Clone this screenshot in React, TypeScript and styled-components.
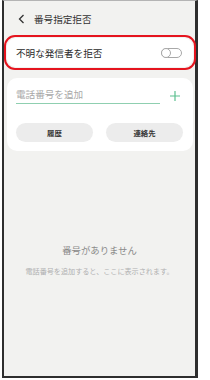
import React from "react";
import styled, { createGlobalStyle } from "styled-components";

const Global = createGlobalStyle`
  html, body { margin: 0; padding: 0; background: #ffffff; }
  body { font-family: "Noto Sans CJK JP", "Noto Sans", sans-serif; }
  * { box-sizing: border-box; }
`;

const Frame = styled.div`
  margin-left: 2px;
  width: 196px;
  height: 378px;
  border-left: 2px solid #2e2e2e;
  border-right: 3px solid #2e2e2e;
  border-bottom: 2px solid #2e2e2e;
  border-top: 1px solid #b4b4b4;
  background: #f2f2f0;
  display: flex;
  flex-direction: column;
`;

const Header = styled.div`
  height: 34px;
  display: flex;
  align-items: center;
  gap: 9px;
  padding-left: 14px;
  padding-top: 1px;
  color: #333;
  font-size: 9.6px;
`;

const Highlight = styled.div`
  border: 2px solid #e5141e;
  border-radius: 11px;
  padding: 1px 1px;
  height: 35px;
  margin-right: -1px;
`;

const RowCard = styled.div`
  height: 100%;
  background: #ffffff;
  border-radius: 9px;
  display: flex;
  align-items: center;
  justify-content: space-between;
  padding: 0 11px 0 9px;
  font-size: 9.6px;
  color: #2a2a2a;
`;

const Toggle = styled.div`
  position: relative;
  width: 21px;
  height: 10px;
  border: 1px solid #a8a8a8;
  border-radius: 5px;
`;

const Knob = styled.div`
  position: absolute;
  left: -1px;
  top: -1px;
  width: 10px;
  height: 10px;
  border: 1px solid #a8a8a8;
  border-radius: 50%;
  background: #fff;
`;

const Card = styled.div`
  margin: 8px 2px 0 3px;
  background: #ffffff;
  border-radius: 10px;
  padding: 10px 10px 9px 9px;
  display: flex;
  flex-direction: column;
`;

const InputRow = styled.div`
  display: flex;
  align-items: center;
  gap: 10px;
`;

const Input = styled.div`
  flex: 1;
  height: 16px;
  font-size: 9.6px;
  color: #a8a8a8;
  border-bottom: 1px solid #8fcfb0;
  line-height: 13px;
`;

const Plus = styled.svg`
  width: 10px;
  height: 10px;
  margin-right: 3px;
`;

const Buttons = styled.div`
  display: grid;
  grid-template-columns: 77px 77px;
  justify-content: space-between;
  margin-top: 19px;
`;

const Pill = styled.div`
  height: 19px;
  border-radius: 10px;
  background: #ececec;
  display: flex;
  align-items: center;
  justify-content: center;
  font-size: 7.4px;
  font-weight: 700;
  color: #333;
`;

const Empty = styled.div`
  flex: 1;
  display: flex;
  flex-direction: column;
  align-items: center;
  padding-top: 92px;
`;

const EmptyTitle = styled.div`
  font-size: 9.4px;
  color: #8a8a8a;
`;

const EmptySub = styled.div`
  margin-top: 9px;
  font-size: 7.1px;
  color: #b0b0b0;
`;

export default function App() {
  return (
    <>
      <Global />
      <Frame>
        <Header>
          <svg width="7" height="10" viewBox="0 0 7 10">
            <path d="M5.5 1 L1.5 5 L5.5 9" fill="none" stroke="#333" strokeWidth="1.3" />
          </svg>
          <span>番号指定拒否</span>
        </Header>
        <Highlight>
          <RowCard>
            <span>不明な発信者を拒否</span>
            <Toggle>
              <Knob />
            </Toggle>
          </RowCard>
        </Highlight>
        <Card>
          <InputRow>
            <Input>電話番号を追加</Input>
            <Plus viewBox="0 0 10 10">
              <path d="M5 0 V10 M0 5 H10" stroke="#5cc08f" strokeWidth="1.2" />
            </Plus>
          </InputRow>
          <Buttons>
            <Pill>履歴</Pill>
            <Pill>連絡先</Pill>
          </Buttons>
        </Card>
        <Empty>
          <EmptyTitle>番号がありません</EmptyTitle>
          <EmptySub>電話番号を追加すると、ここに表示されます。</EmptySub>
        </Empty>
      </Frame>
    </>
  );
}
